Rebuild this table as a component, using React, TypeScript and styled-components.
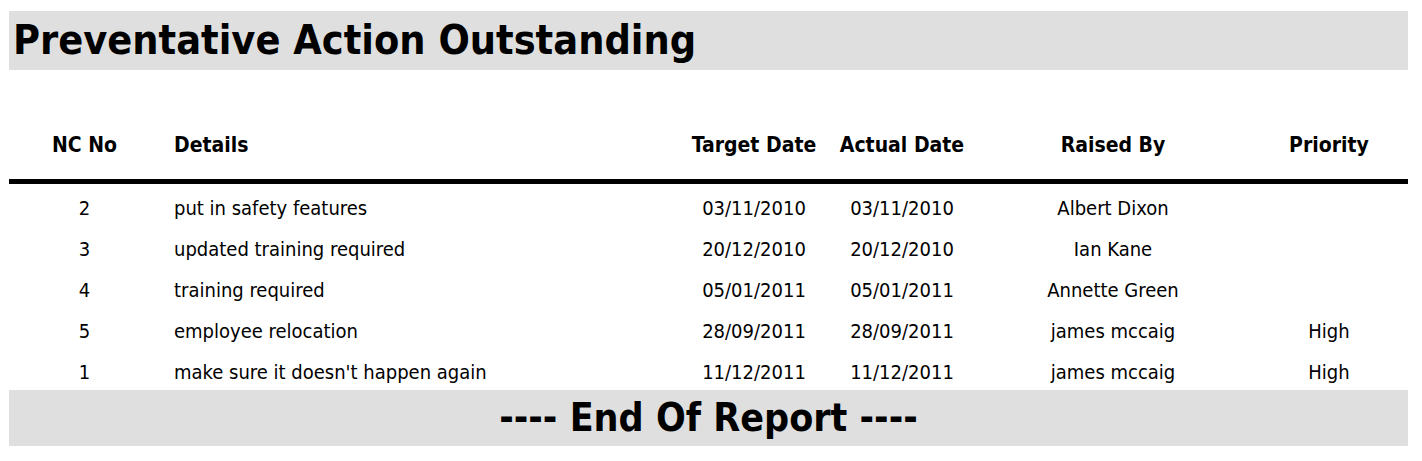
import styled, { createGlobalStyle } from 'styled-components'

const rows = [
  { no: '2', details: 'put in safety features', target: '03/11/2010', actual: '03/11/2010', by: 'Albert Dixon', priority: '' },
  { no: '3', details: 'updated training required', target: '20/12/2010', actual: '20/12/2010', by: 'Ian Kane', priority: '' },
  { no: '4', details: 'training required', target: '05/01/2011', actual: '05/01/2011', by: 'Annette Green', priority: '' },
  { no: '5', details: 'employee relocation', target: '28/09/2011', actual: '28/09/2011', by: 'james mccaig', priority: 'High' },
  { no: '1', details: "make sure it doesn't happen again", target: '11/12/2011', actual: '11/12/2011', by: 'james mccaig', priority: 'High' },
]

function App() {
  return (
    <>
      <GlobalStyle />
      <Page>
        <TitleBar>Preventative Action Outstanding</TitleBar>
        <Table>
          <colgroup>
            <col style={{ width: 151 }} />
            <col style={{ width: 520 }} />
            <col style={{ width: 148 }} />
            <col style={{ width: 148 }} />
            <col style={{ width: 274 }} />
            <col />
          </colgroup>
          <thead>
            <tr>
              <Th>NC No</Th>
              <Th $align="left">Details</Th>
              <Th>Target Date</Th>
              <Th>Actual Date</Th>
              <Th>Raised By</Th>
              <Th>Priority</Th>
            </tr>
          </thead>
          <tbody>
            {rows.map((r) => (
              <tr key={r.no}>
                <Td>{r.no}</Td>
                <Td $align="left">{r.details}</Td>
                <Td>{r.target}</Td>
                <Td>{r.actual}</Td>
                <Td>{r.by}</Td>
                <Td>{r.priority}</Td>
              </tr>
            ))}
          </tbody>
        </Table>
        <FooterBar>---- End Of Report ----</FooterBar>
      </Page>
    </>
  )
}

export default App

const GlobalStyle = createGlobalStyle`
  body {
    margin: 0;
    background: #ffffff;
    font-family: "DejaVu Sans Condensed", "DejaVu Sans", sans-serif;
    color: #000000;
  }
`

const Page = styled.div`
  padding: 11px 14px 0 9px;
  width: 1399px;
`

const TitleBar = styled.h1`
  margin: 0;
  height: 59px;
  background-color: #dfdfdf;
  font-size: 41px;
  font-weight: 700;
  line-height: 59px;
  padding-left: 4px;
  white-space: nowrap;
`

const Table = styled.table`
  width: 100%;
  margin-top: 41px;
  border-collapse: collapse;
  table-layout: fixed;
  font-size: 20px;
`

const Th = styled.th<{ $align?: string }>`
  height: 68px;
  padding: 0 0 0 ${(p) => (p.$align === 'left' ? '14px' : '0')};
  text-align: ${(p) => p.$align || 'center'};
  font-size: 21px;
  font-weight: 700;
  border-bottom: 5px solid #000000;
  white-space: nowrap;
`

const Td = styled.td<{ $align?: string }>`
  height: 34px;
  padding: 7px 0 0 ${(p) => (p.$align === 'left' ? '14px' : '0')};
  text-align: ${(p) => p.$align || 'center'};
  white-space: nowrap;
`

const FooterBar = styled.div`
  margin-top: 1px;
  height: 56px;
  background-color: #dfdfdf;
  font-size: 39px;
  font-weight: 700;
  line-height: 56px;
  text-align: center;
`
